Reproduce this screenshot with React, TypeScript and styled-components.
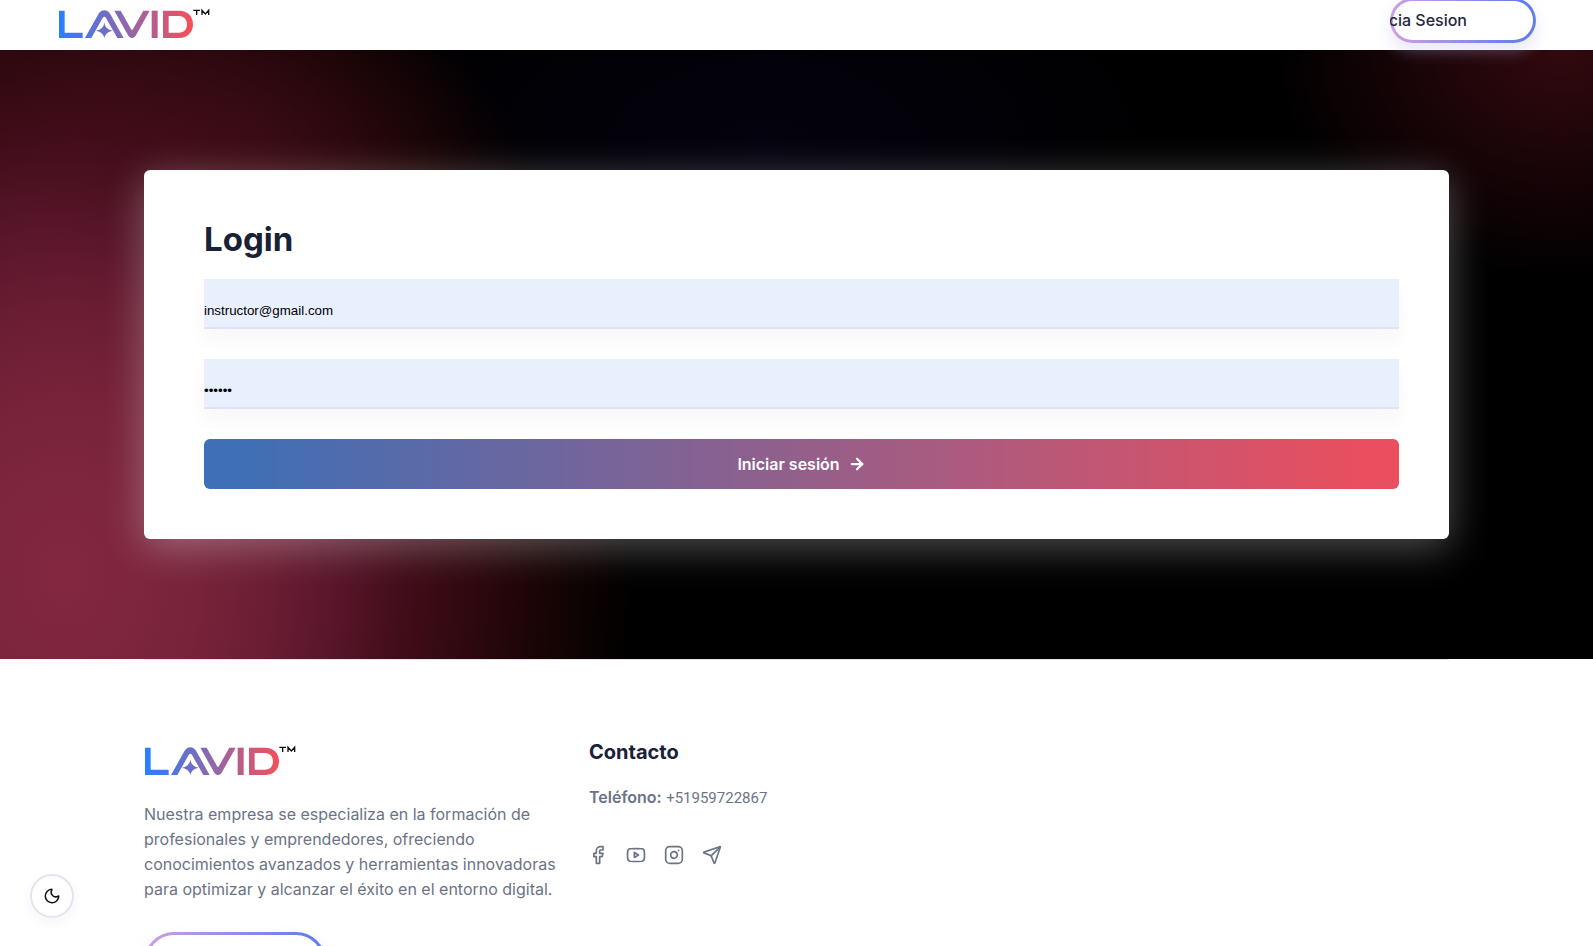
import React from 'react';
import styled, { createGlobalStyle } from 'styled-components';
import { ArrowRight, Facebook, Instagram, Moon, Send } from 'lucide-react';

const GlobalStyle = createGlobalStyle`
  *, *::before, *::after { box-sizing: border-box; }
  body {
    margin: 0;
    background: #fff;
    color: #6b7385;
    font-family: Inter, "Liberation Sans", sans-serif;
    font-size: 16px;
    line-height: 25px;
  }
  h1, h2, p { margin: 0; }
`;

const Header = styled.header`
  display: flex;
  align-items: flex-start;
  justify-content: space-between;
  height: 50px;
  padding: 0 57px;
  background: #fff;
`;

const LogoLink = styled.a`
  display: block;
  width: max-content;
  line-height: 0;
`;

const HeaderLogo = styled(LogoLink)`
  padding-top: 8px;
`;

const PillButton = styled.button<{ $wide?: boolean }>`
  position: relative;
  z-index: 1;
  display: flex;
  align-items: center;
  justify-content: flex-end;
  width: ${(p) => (p.$wide ? 182 : 146)}px;
  height: ${(p) => (p.$wide ? 60 : 45)}px;
  padding: 0 ${(p) => (p.$wide ? 45 : 69)}px 2px 0;
  border: 0;
  border-radius: 30px;
  overflow: hidden;
  background: linear-gradient(90deg, #cf9ee6, #637fea 90%);
  box-shadow: 0 8px 16px rgba(190, 186, 230, 0.35);
  color: #1f2839;
  font: 500 16px/24px Inter, "Liberation Sans", sans-serif;
  white-space: nowrap;
  cursor: pointer;

  &::before {
    content: '';
    position: absolute;
    inset: 3px;
    border-radius: 27px;
    background: #fff;
  }
`;

const PillLabel = styled.span`
  position: relative;
`;

const HeaderAction = styled.div`
  margin-top: -2px;
`;

const Hero = styled.main`
  padding: 120px 144px;
  background:
    radial-gradient(ellipse 290px 230px at 98% 0%, #32090f 0%, rgba(40, 7, 12, 0.7) 45%, transparent 100%),
    radial-gradient(ellipse 240px 170px at 15% 14%, rgba(70, 14, 26, 0.4) 0%, rgba(70, 14, 26, 0.2) 50%, transparent 100%),
    radial-gradient(
      ellipse 570px 730px at 4% 86%,
      #82273f 0%, #7e263e 12%, #77233a 24%, #6b1d33 36%, #5a162b 47%, #3f0c18 61%, #310910 70%, #1c0506 82%, transparent 100%
    ),
    radial-gradient(ellipse 420px 240px at 48% 16%, #04020e 0%, transparent 100%),
    #000;
`;

const Card = styled.form`
  display: flex;
  flex-direction: column;
  padding: 50px 50px 50px 60px;
  border-radius: 6px;
  background: #fff;
  box-shadow: 0 8px 40px rgba(255, 255, 255, 0.32);
`;

const Title = styled.h1`
  margin-bottom: 21px;
  color: #182136;
  font-size: 33px;
  font-weight: 700;
  line-height: 38px;
`;

const Field = styled.input`
  width: 100%;
  height: 50px;
  margin-bottom: 30px;
  padding: 14px 0 0;
  border: 0;
  border-bottom: 2px solid #e4e0f0;
  border-radius: 0;
  outline: 0;
  background: #e8effd;
  box-shadow: 0 12px 20px rgba(80, 50, 100, 0.04);
  color: #000;
  font-family: "Liberation Sans", sans-serif;
`;

const SubmitButton = styled.button`
  display: flex;
  align-items: center;
  justify-content: center;
  gap: 8px;
  height: 50px;
  border: 0;
  border-radius: 6px;
  background: linear-gradient(90deg, #3f6fb6 0%, #3f6fb6 3%, #e94f5f 97%, #e94f5f 100%);
  color: #fff;
  font: 600 16px/24px Inter, "Liberation Sans", sans-serif;
  cursor: pointer;
`;

const Footer = styled.footer`
  display: grid;
  grid-template-columns: 415px 1fr;
  column-gap: 30px;
  margin: 0 144px;
  padding: 80px 0;
  border-top: 1px solid #e6e3f1;
`;

const About = styled.section`
  display: flex;
  flex-direction: column;
  padding-top: 5px;
`;

const FooterLogo = styled(LogoLink)`
  margin-left: -1px;
`;

const AboutText = styled.p`
  margin: 26px 0 30px;
`;

const ContactTitle = styled.h2`
  margin-bottom: 20px;
  color: #182136;
  font-size: 20px;
  font-weight: 700;
  line-height: 25px;
`;

const Phone = styled.p`
  height: 25px;
  margin-bottom: 35px;

  strong { font-weight: 600; }
`;

const PhoneNumber = styled.span`
  font-family: Roboto, Inter, sans-serif;
  font-size: 15px;
  line-height: 20px;
`;

const SocialList = styled.nav`
  display: flex;
  gap: 18px;
  margin-left: -1px;
`;

const SocialLink = styled.a`
  display: flex;
  color: #6b7385;
`;

const ThemeToggle = styled.button`
  position: fixed;
  left: 30px;
  bottom: 28px;
  z-index: 2;
  display: flex;
  align-items: center;
  justify-content: center;
  width: 44px;
  height: 44px;
  padding: 0;
  border: 2px solid #e6e3f1;
  border-radius: 50%;
  background: #fff;
  box-shadow: 0 4px 12px rgba(80, 70, 120, 0.06);
  color: #111;
  cursor: pointer;
`;

function Logo({ id }: { id: string }) {
  return (
    <svg width="154" height="31" viewBox="0 0 462 93" role="img" aria-label="Lavid">
      <defs>
        <linearGradient id={id} gradientUnits="userSpaceOnUse" x1="6" y1="60" x2="408" y2="40">
          <stop offset="0" stopColor="#2680ff" />
          <stop offset="1" stopColor="#f84e58" />
        </linearGradient>
      </defs>
      <g fill={`url(#${id})`}>
        <path d="M6 8H23V74H77V90H6Z" />
        <path d="M84 90L124 19Q131 7 142 7Q153 7 160 19L200 90H181L147 30Q142 22 137 30L103 90Z" />
        <path d="M142 44Q145 64 167 68Q145 72 142 91Q139 72 117 68Q139 64 142 44Z" />
        <path d="M172 8H191L222 63Q225 69 228 63L259 8H278L239 78Q233 90 225 90Q217 90 211 78Z" />
        <path d="M284 8H302V90H284Z" />
        <path
          fillRule="evenodd"
          d="M318 8H366C392 8 408 25 408 49S392 90 366 90H318ZM335 24V74H366C382 74 390 63 390 49S382 24 366 24Z"
        />
      </g>
      <path
        d="M409 7H429M419 7V21M435 21V7L445 18L455 7V21"
        fill="none"
        stroke="#111"
        strokeWidth="4"
      />
    </svg>
  );
}

function VideoIcon({ size }: { size: number }) {
  return (
    <svg
      width={size}
      height={size}
      viewBox="0 0 24 24"
      fill="none"
      stroke="currentColor"
      strokeWidth="2"
      strokeLinejoin="round"
    >
      <path d="M5 4.500Q12 4 19 4.500Q21.800 4.800 22 8Q22.300 12 22 16Q21.800 19.200 19 19.500Q12 20 5 19.500Q2.200 19.200 2 16Q1.700 12 2 8Q2.200 4.800 5 4.500Z" />
      <path d="M10 9V15L15 12Z" />
    </svg>
  );
}

const socials = [
  { label: 'Facebook', Icon: Facebook },
  { label: 'YouTube', Icon: VideoIcon },
  { label: 'Instagram', Icon: Instagram },
  { label: 'Telegram', Icon: Send },
];

export default function App() {
  return (
    <>
      <GlobalStyle />
      <Header>
        <HeaderLogo href="#"><Logo id="logo-header" /></HeaderLogo>
        <HeaderAction>
          <PillButton type="button"><PillLabel>Inicia Sesion</PillLabel></PillButton>
        </HeaderAction>
      </Header>
      <Hero>
        <Card>
          <Title>Login</Title>
          <Field type="email" aria-label="Correo" defaultValue="instructor@gmail.com" />
          <Field type="password" aria-label="Contraseña" defaultValue="123456" />
          <SubmitButton type="button">Iniciar sesión <ArrowRight size={18} strokeWidth={3} /></SubmitButton>
        </Card>
      </Hero>
      <Footer>
        <About>
          <FooterLogo href="#"><Logo id="logo-footer" /></FooterLogo>
          <AboutText>
            Nuestra empresa se especializa en la formación de profesionales y emprendedores,
            ofreciendo conocimientos avanzados y herramientas innovadoras para optimizar y
            alcanzar el éxito en el entorno digital.
          </AboutText>
          <PillButton type="button" $wide aria-label="Contacto" />
        </About>
        <section>
          <ContactTitle>Contacto</ContactTitle>
          <Phone><strong>Teléfono:</strong> <PhoneNumber>+51959722867</PhoneNumber></Phone>
          <SocialList aria-label="Redes sociales">
            {socials.map(({ label, Icon }) => (
              <SocialLink key={label} href="#" aria-label={label}><Icon size={20} /></SocialLink>
            ))}
          </SocialList>
        </section>
      </Footer>
      <ThemeToggle type="button" aria-label="Tema oscuro"><Moon size={18} /></ThemeToggle>
    </>
  );
}
